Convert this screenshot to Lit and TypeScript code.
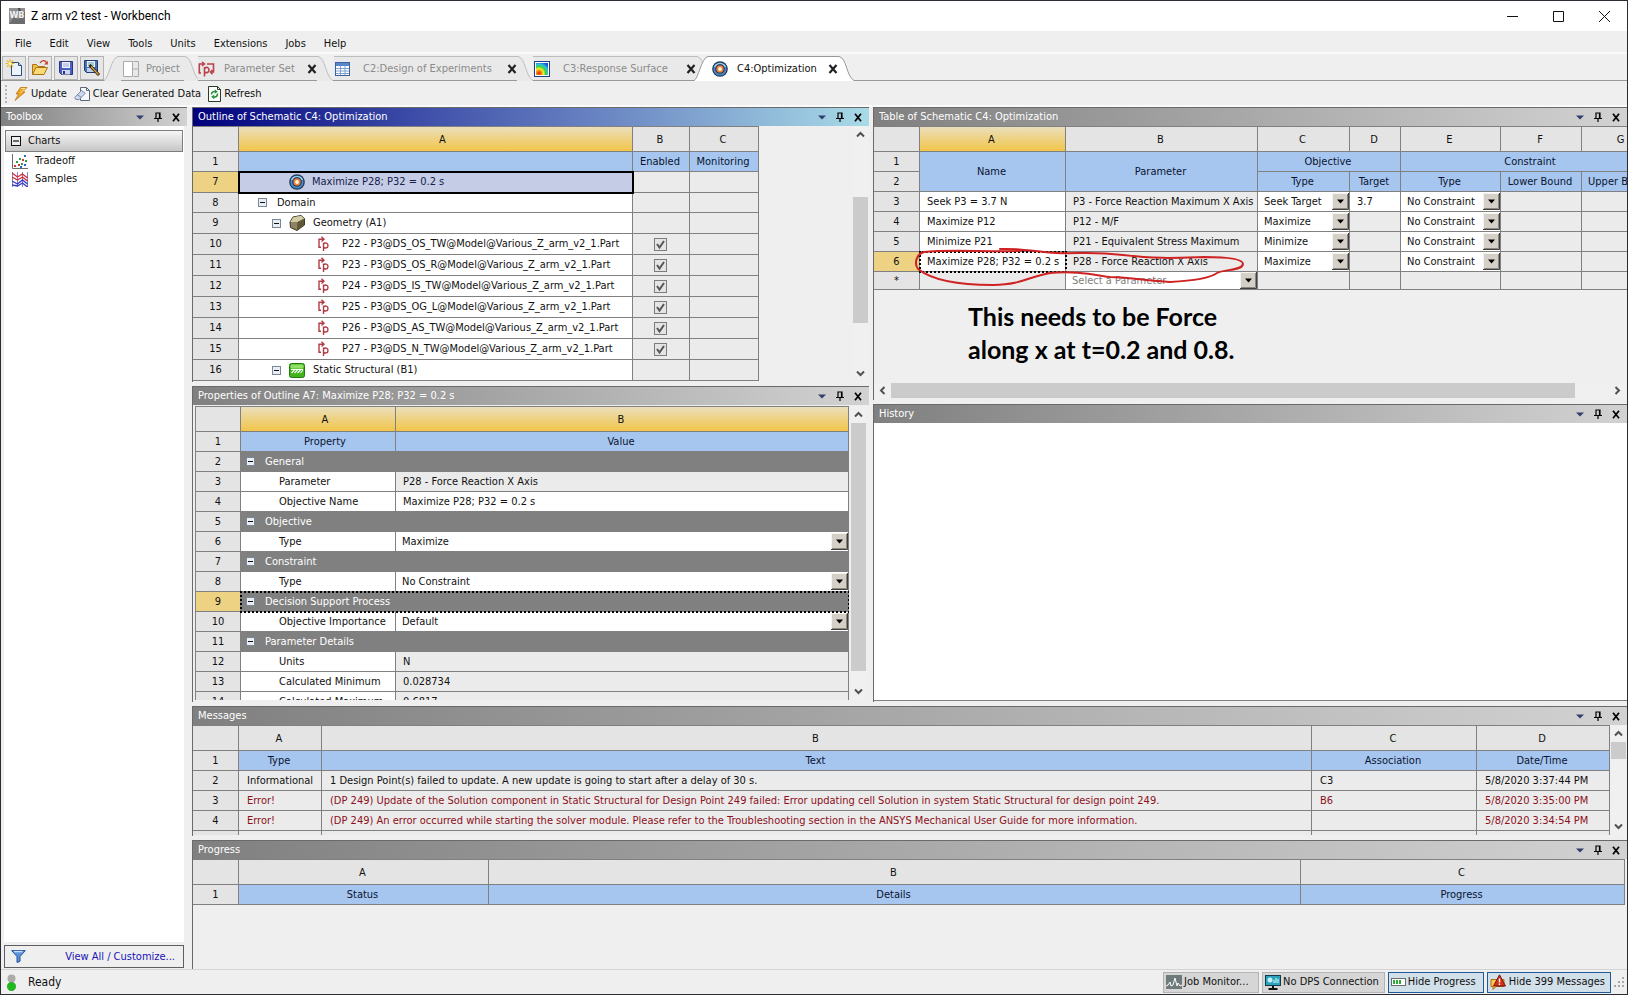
import { LitElement, html, css, svg, nothing } from "lit";
import { customElement, property } from "lit/decorators.js";
import { classMap } from "lit/directives/class-map.js";

const base = css`
  *, *::before, *::after { box-sizing: border-box; }
  button, select, input {
    font: inherit; color: inherit; margin: 0; padding: 0;
    border: 0; border-radius: 0; background: none; appearance: none;
  }
  svg { display: block; flex: none; }
`;

/* ---------- icons ---------- */

const ico = (w: number, h: number, body: unknown) =>
  html`<svg width=${w} height=${h} viewBox="0 0 ${w} ${h}" aria-hidden="true">${body}</svg>`;

const targetIcon = ico(16, 16, svg`
  <circle cx="8" cy="8" r="7.8" fill="#1d3550"/>
  <circle cx="8" cy="8" r="6.6" fill="#4a86c4"/>
  <path d="M2.600 6a6 6 0 0 1 10.800 0" fill="none" stroke="#a4d0f0" stroke-width="1.400"/>
  <circle cx="8" cy="8" r="4.700" fill="#1a2a44"/>
  <circle cx="8" cy="8" r="3.700" fill="#e6803c"/>
  <circle cx="8" cy="8" r="1.900" fill="#fff3dc"/>`);

const newIcon = ico(18, 18, svg`
  <path d="M6.500 3.500h7l3 3v10h-10z" fill="#eaf2fc" stroke="#31507c"/>
  <path d="M13.500 3.500v3h3" fill="#b9cde6" stroke="#31507c"/>
  <path d="M5 0v9M.500 4.500h9M1.800 1.300l6.400 6.400M8.200 1.300L1.800 7.700" stroke="#e8b92d" stroke-width="1.200"/>
  <circle cx="5" cy="4.500" r="1.600" fill="#fff6c0"/>`);

const openIcon = ico(18, 18, svg`
  <path d="M1.500 15.500v-10h4l1.500 2h6.500v3" fill="#f0bc4a" stroke="#a8741a"/>
  <path d="M1.500 15.500l3.500-7h11.500l-3.500 7z" fill="#fbd977" stroke="#a8741a"/>
  <path d="M9 4c2-3 5-3 6.500-.5" fill="none" stroke="#c43a26" stroke-width="1.300"/>
  <path d="M16.800 1.800v3.700h-3.600z" fill="#c43a26"/>`);

const saveIcon = ico(18, 18, svg`
  <path d="M2.500 2.500h13v13h-11l-2-2z" fill="#4a60c0" stroke="#26357c"/>
  <rect x="5" y="3" width="8" height="6" fill="#f2f5ff"/>
  <path d="M6 5h6M6 7h6" stroke="#93a0d8"/>
  <rect x="5" y="11" width="8" height="4.500" fill="#cfd5ee"/>
  <rect x="6" y="12" width="2" height="3" fill="#26357c"/>`);

const saveAsIcon = ico(18, 18, svg`
  <path d="M1.500 1.500h13v12h-11l-2-2z" fill="#4a72b8" stroke="#223a70"/>
  <rect x="4" y="2" width="8" height="6" fill="#e6f3f4"/>
  <path d="M5 4h6M5 6h6" stroke="#6fa3ad"/>
  <rect x="4" y="9" width="7" height="4" fill="#bfd0e6"/>
  <path d="M6.500 6l9.500 10" stroke="#2a2113" stroke-width="3"/>
  <path d="M8 7.500l7.500 8" stroke="#d9a33c" stroke-width="1.300"/>`);

const projectIcon = ico(16, 16, svg`
  <path d="M.500.500h9v15h-9zM9.500 8h6M15.500.500v15M10.500 15.500h5M10.500.500h5" fill="none" stroke="#a9a9a9"/>
  <rect x="1" y="1" width="8" height="14" fill="#fff"/>`);

const paramSetIcon = ico(17, 16, svg`
  <g fill="none" stroke="#b8434b" stroke-width="1.600">
    <path d="M3 12H1.300V3H5M4 1l2.500 2L4 5"/><path d="M9 3h6.500v8h-2.500M14.500 9l-2 2 2 2.200"/>
    <path d="M6.500 6v9.500M6.500 7.500c2-2 4.500-1 4.500 1.500s-2.500 3.500-4.500 1.800"/>
  </g>`);

const paramIcon = ico(11, 16, svg`
  <g fill="none" stroke="#b33c44" stroke-width="1.400">
    <path d="M3 11.300H1V3.200h4M3.500.800L6 3.200 3.500 5.500"/>
    <path d="M5.500 6.500V15M5.500 8c1.500-1.700 4.500-1.300 4.500 1.500s-3 3.200-4.500 1.500"/>
  </g>`);

const tableIcon = ico(15, 14, svg`
  <rect x=".500" y=".500" width="14" height="13" fill="#fff" stroke="#3c62a6"/>
  <rect x="1" y="1" width="13" height="3" fill="#5b86c8"/>
  <path d="M1 6.500h13M1 9h13M1 11.500h13M5.500 4v9M10 4v9" stroke="#7e9fd2"/>`);

const surfaceIcon = html`<svg width="16" height="16" viewBox="0 0 16 16" aria-hidden="true">
  <defs><radialGradient id="rs" cx="0.25" cy="0.85" r="0.95">
    <stop offset="0" stop-color="#e02010"/><stop offset=".22" stop-color="#f08a12"/>
    <stop offset=".4" stop-color="#f2ee2a"/><stop offset=".58" stop-color="#3ad23c"/>
    <stop offset=".78" stop-color="#2cc4dc"/><stop offset="1" stop-color="#2450d8"/>
  </radialGradient></defs>
  <rect x=".5" y=".5" width="15" height="15" fill="#fff" stroke="#1d3f86"/>
  <rect x="2" y="2" width="12" height="12" fill="url(#rs)"/></svg>`;

const boltIcon = ico(14, 14, svg`
  <path d="M6.500.500H13L8.500 5H11L1 13.500 4.800 7H2z" fill="#f4a51e" stroke="#b8741a" stroke-width=".800"/>
  <path d="M7 1.500h4L6.500 6" fill="none" stroke="#ffe08a"/>`);

const clearIcon = ico(16, 15, svg`
  <path d="M6.500 1.500h6l3 3v10h-9z" fill="#f6f8fb" stroke="#5c6878"/>
  <path d="M12.500 1.500v3h3" fill="none" stroke="#5c6878"/>
  <path d="M.700 11.500L7.500 4.500l3.800 2.700-6.300 6.500-3.500-.4z" fill="#cfd8ee" stroke="#7b89ac"/>
  <path d="M3.500 8.800l3.800 2.600" stroke="#7b89ac"/>`);

const refreshIcon = ico(13, 16, svg`
  <path d="M.500.500h9l3 3v12h-12z" fill="#fff" stroke="#2b3a2b"/>
  <path d="M9.500.500v3h3" fill="none" stroke="#2b3a2b"/>
  <path d="M3.500 8.500c0-2.500 2-3.500 4-2.800M9.500 7.500c.2 2.500-1.700 4-4 3.400" fill="none" stroke="#2b8f3a" stroke-width="1.600"/>
  <path d="M6.800 3.300l3 2.500-3 2zM6.200 13.200l-3-2.400 3-2.300z" fill="#2b8f3a"/>`);

const tradeoffIcon = ico(16, 15, svg`
  <path d="M.500 0v14.500H16" fill="none" stroke="#6d6d6d"/>
  <g fill="#2d9a48"><rect x="4" y="7" width="2" height="2"/><rect x="9" y="9" width="2" height="2"/><rect x="7" y="4" width="2" height="2"/><rect x="13" y="6" width="2" height="2"/></g>
  <g fill="#2e62c8"><rect x="12" y="1" width="2" height="2"/><rect x="12" y="10" width="2" height="2"/><rect x="8" y="12" width="2" height="2"/></g>
  <g fill="#d0392b"><rect x="2" y="11" width="2" height="2"/><rect x="6" y="10" width="2" height="2"/><rect x="10" y="5" width="2" height="2"/></g>`);

const samplesIcon = ico(16, 15, svg`
  <path d="M.500 0v15M5.500 0v15M10.500 0v15M15.500 0v15" stroke="#8a7fb4"/>
  <g fill="none" stroke-width="1.400">
    <path d="M0 1l5.500 4 5-3 5 4" stroke="#d02f3c"/><path d="M0 5l5.500 3 5-3 5 4" stroke="#d02f3c"/>
    <path d="M0 9l5.500 3 5-4 5 4" stroke="#3a3fc8"/><path d="M0 13l5.500 1 5-3 5 4" stroke="#3a3fc8"/>
  </g>`);

const geometryIcon = ico(16, 16, svg`
  <path d="M1 7l3-5 8-1.500 3.500 3V10L8 15.500l-6.500-3z" fill="#8d8561" stroke="#38321c"/>
  <path d="M1.300 7l3-4.800L12 .800l3.200 2.700L8.500 7z" fill="#d2cba6"/>
  <path d="M8.500 7l6.700-3.300V10L8 15z" fill="#5f5738"/>`);

const structuralIcon = ico(16, 15, svg`
  <rect x=".500" y=".500" width="15" height="14" rx="2" fill="#43b31c" stroke="#237a0d"/>
  <rect x="1.500" y="1.500" width="13" height="4" rx="1.500" fill="#8fe063"/>
  <path d="M2 6.500h12M2.500 10l3-3M5.500 10l3-3M8.500 10l3-3M11.500 10l2.500-3" stroke="#fff" stroke-width="1.100"/>`);

const filterIcon = ico(15, 13, svg`
  <path d="M.700.600h13.600L9 6.600v4.800l-3 1V6.600z" fill="#5a93dc" stroke="#27539c"/>
  <path d="M3 1.600h8.500" stroke="#c5ddf8" stroke-width="1.400"/>`);

const wbIcon = html`<svg width="16" height="16" viewBox="0 0 16 16" role="img" aria-label="Workbench">
  <rect width="16" height="16" fill="#8f8f8f"/><path d="M0 16l5-7 4 2 7-8v13z" fill="#6c6c6c"/>
  <path d="M9 0l2 0 2 5-3 1z" fill="#4b4b4b"/>
  <text x="8" y="10" text-anchor="middle" font-family="DejaVu Sans Condensed" font-weight="bold" font-size="9" fill="#f1f1f1">WB</text></svg>`;

const monitorIcon = ico(16, 14, svg`
  <rect width="16" height="14" fill="#6e7a7c"/>
  <path d="M0 11l2-1 2-3 1 4 2-1 2-7 2 8 1-3 2 3 2-1" fill="none" stroke="#fff"/>`);

const dpsIcon = ico(16, 15, svg`
  <rect x=".500" y=".500" width="15" height="10" fill="#2ba3bd" stroke="#123a4a"/>
  <circle cx="5" cy="5" r="2.500" fill="#c4f0f6"/><path d="M9 8V5M11 8V3M13 8V4" stroke="#e9fbff"/>
  <path d="M8 11v2M3.500 14h9" stroke="#111" stroke-width="2"/>`);

const progressIcon = ico(15, 8, svg`
  <rect x=".500" y=".500" width="14" height="7" fill="#fff" stroke="#6c6c6c"/>
  <path d="M2 4h2M5 4h2M8 4h2" stroke="#2cae36" stroke-width="4"/>`);

const messageIcon = ico(17, 16, svg`
  <path d="M1 5.500h13v7H6l-3 3v-3H1z" fill="#f7c64b" stroke="#a9731a"/>
  <path d="M9.500.800L15.500 12h-12z" fill="#d3301c" stroke="#7c1508"/>
  <path d="M9.500 4.500v4M9.500 9.500v1.500" stroke="#fff" stroke-width="1.400"/>`);

const closeX = ico(10, 10, svg`<path d="M1.500 1l7 8M8.500 1l-7 8" stroke="#222" stroke-width="2.200"/>`);

/* ---------- combo box ---------- */

@customElement("wb-combo")
class WbCombo extends LitElement {
  static styles = [base, css`
    :host { display: grid; height: 19px; align-items: center; }
    :host([hint]) { height: 17px; }
    select, svg { grid-area: 1 / 1; }
    select { width: 100%; height: 17px; padding: 0 18px 0 6px; overflow: hidden; }
    select.hint { color: #808080; }
    svg { justify-self: end; pointer-events: none; }
  `];
  @property() value = "";
  @property() name = "";
  @property({ type: Boolean }) hint = false;
  @property({ attribute: false }) options: string[] = [];
  render() {
    const all = [this.value, ...this.options.filter((o) => o !== this.value)];
    return html`<select class=${classMap({ hint: this.hint })} aria-label=${this.name}>
        ${all.map((o) => html`<option>${o}</option>`)}
      </select>
      ${ico(17, 17, svg`
        <rect width="17" height="17" fill="#d4d0c8"/>
        <path d="M.500 16V.500H16" fill="none" stroke="#f6f4ee"/>
        <path d="M16.500 0v16.500H0" fill="none" stroke="#404040"/>
        <path d="M15.500 1v14.500H1" fill="none" stroke="#8c8880"/>
        <path d="M5 6.500h7L8.500 10.500z" fill="#000"/>`)}`;
  }
}

/* ---------- scroll bar ---------- */

@customElement("wb-scroll")
class WbScroll extends LitElement {
  static styles = [base, css`
    :host { display: flex; flex: none; background: #f0f0f0; }
    .bar { display: flex; flex: 1; flex-direction: column; width: 15px; }
    .bar.h { flex-direction: row; width: auto; height: 15px; }
    button { display: grid; place-items: center; flex: none; width: 15px; height: 17px; }
    .h button { width: 17px; height: 15px; }
    .gap { flex-basis: 0; }
    .thumb { flex-basis: 0; background: #cbcbcb; }
  `];
  @property({ type: Boolean }) horizontal = false;
  @property({ type: Number }) before = 0;
  @property({ type: Number }) size = 1;
  @property({ type: Number }) after = 0;
  render() {
    const h = this.horizontal;
    const arrow = (d: string) => ico(9, 9, svg`<path d=${d} fill="none" stroke="#505050" stroke-width="2"/>`);
    return html`<div class=${classMap({ bar: true, h })}>
      <button aria-label="Scroll back">${arrow(h ? "M6.500 1L3 4.500 6.500 8" : "M1 6.500L4.500 3 8 6.500")}</button>
      <div class="gap" style="flex-grow:${this.before}"></div>
      <div class="thumb" style="flex-grow:${this.size}"></div>
      <div class="gap" style="flex-grow:${this.after}"></div>
      <button aria-label="Scroll forward">${arrow(h ? "M2.500 1L6 4.500 2.500 8" : "M1 2.500L4.500 6 8 2.500")}</button>
    </div>`;
  }
}

/* ---------- docked pane ---------- */

@customElement("wb-pane")
class WbPane extends LitElement {
  static styles = [base, css`
    :host {
      display: flex; flex-direction: column; box-sizing: border-box; min-width: 0; min-height: 0; overflow: hidden;
      border-top: 1px solid #6a6a6a; border-left: 1px solid #6a6a6a;
    }
    header {
      display: flex; align-items: center; flex: none; height: 18px; padding: 0 4px 0 5px;
      color: #fff; background: linear-gradient(90deg, #808080, #d2d2d2);
    }
    header.active { background: linear-gradient(90deg, #00007c, #3d4da8 33%, #6c88c4 62%, #a8dbe7); }
    h2 { flex: 1; margin: 0; font: inherit; overflow: hidden; white-space: nowrap; }
    .tools { display: flex; gap: 4px; }
    .tools button { display: grid; place-items: center; width: 14px; height: 16px; }
    .body { display: flex; flex: 1; flex-direction: column; min-height: 0; }
  `];
  @property() heading = "";
  @property({ type: Boolean }) active = false;
  render() {
    return html`<header class=${classMap({ active: this.active })}>
        <h2>${this.heading}</h2>
        <div class="tools">
          <button aria-label="Pane menu">${ico(8, 5, svg`<path d="M0 .500h8L4 4.500z" fill="#2f3f6e"/>`)}</button>
          <button aria-label="Pin">${ico(8, 10, svg`<path d="M2 6V1h4v5M5.500 1v5M0 6.500h8M4 7v3" fill="none" stroke="#000" stroke-width="1.200"/>`)}</button>
          <button aria-label="Close">${ico(8, 9, svg`<path d="M1 .800l6 7.400M7 .800L1 8.200" stroke="#000" stroke-width="1.700"/>`)}</button>
        </div>
      </header>
      <div class="body"><slot></slot></div>`;
  }
}

/* ---------- data ---------- */

type TreeRow = {
  n: number; label: string; level: "objective" | "group" | "system" | "param";
  icon?: unknown; box?: boolean; check?: boolean; selected?: boolean;
};

const tree: TreeRow[] = [
  { n: 7, label: "Maximize P28; P32 = 0.2 s", level: "objective", icon: targetIcon, selected: true },
  { n: 8, label: "Domain", level: "group", box: true },
  { n: 9, label: "Geometry (A1)", level: "system", box: true, icon: geometryIcon },
  ...[["P22", "OS_TW"], ["P23", "OS_R"], ["P24", "IS_TW"], ["P25", "OG_L"], ["P26", "AS_TW"], ["P27", "N_TW"]].map(
    ([p, s], i): TreeRow => ({
      n: 10 + i, label: `${p} - P3@DS_${s}@Model@Various_Z_arm_v2_1.Part`,
      level: "param", icon: paramIcon, check: true,
    })),
  { n: 16, label: "Static Structural (B1)", level: "system", box: true, icon: structuralIcon },
];

const objectives = [
  { n: 3, name: "Seek P3 = 3.7 N", param: "P3 - Force Reaction Maximum X Axis", type: "Seek Target", target: "3.7" },
  { n: 4, name: "Maximize P12", param: "P12 - M/F", type: "Maximize", target: "" },
  { n: 5, name: "Minimize P21", param: "P21 - Equivalent Stress Maximum", type: "Minimize", target: "" },
  { n: 6, name: "Maximize P28; P32 = 0.2 s", param: "P28 - Force Reaction X Axis", type: "Maximize", target: "", current: true },
];

type Prop = { n: number; group?: string; label?: string; value?: string; kind?: "edit" | "combo"; current?: boolean };
const props: Prop[] = [
  { n: 2, group: "General" },
  { n: 3, label: "Parameter", value: "P28 - Force Reaction X Axis" },
  { n: 4, label: "Objective Name", value: "Maximize P28; P32 = 0.2 s", kind: "edit" },
  { n: 5, group: "Objective" },
  { n: 6, label: "Type", value: "Maximize", kind: "combo" },
  { n: 7, group: "Constraint" },
  { n: 8, label: "Type", value: "No Constraint", kind: "combo" },
  { n: 9, group: "Decision Support Process", current: true },
  { n: 10, label: "Objective Importance", value: "Default", kind: "combo" },
  { n: 11, group: "Parameter Details" },
  { n: 12, label: "Units", value: "N" },
  { n: 13, label: "Calculated Minimum", value: "0.028734" },
  { n: 14, label: "Calculated Maximum", value: "0.6817" },
];

const messages = [
  { n: 2, type: "Informational", text: "1 Design Point(s) failed to update. A new update is going to start after a delay of 30 s.", assoc: "C3", time: "5/8/2020 3:37:44 PM" },
  { n: 3, type: "Error!", text: "(DP 249) Update of the Solution component in Static Structural for Design Point 249 failed: Error updating cell Solution in system Static Structural for design point 249.", assoc: "B6", time: "5/8/2020 3:35:00 PM" },
  { n: 4, type: "Error!", text: "(DP 249) An error occurred while starting the solver module. Please refer to the Troubleshooting section in the ANSYS Mechanical User Guide for more information.", assoc: "", time: "5/8/2020 3:34:54 PM" },
];

const goalTypes = ["No Objective", "Minimize", "Maximize", "Seek Target"];
const constraintTypes = ["No Constraint", "Values = Bound", "Values <= Upper Bound"];

const tabs = [
  { label: "Project", icon: projectIcon, cls: "project", close: false },
  { label: "Parameter Set", icon: paramSetIcon, cls: "params", close: true },
  { label: "C2:Design of Experiments", icon: tableIcon, cls: "doe", close: true },
  { label: "C3:Response Surface", icon: surfaceIcon, cls: "surface", close: true },
  { label: "C4:Optimization", icon: targetIcon, cls: "current", close: true },
];

const minusBox = html`<button class="fold" aria-label="Collapse">${ico(9, 9, svg`
  <rect x=".500" y=".500" width="8" height="8" fill="#e9edf4" stroke="#7b8794"/><path d="M2 4.500h5" stroke="#111"/>`)}</button>`;

const cols = (...w: (number | null)[]) =>
  html`<colgroup>${w.map((x) => (x === null ? html`<col>` : html`<col style="width:${x}px">`))}</colgroup>`;

/* ---------- application ---------- */

@customElement("app-root")
class AppRoot extends LitElement {
  static styles = [base, css`
    :host {
      display: flex; flex-direction: column; height: 100vh; overflow: hidden; box-sizing: border-box;
      border: 1px solid #2b2b33; background: #efefef; color: #111;
      font: 11px/14px "DejaVu Sans Condensed", "DejaVu Sans", sans-serif; 
    }
    .titlebar { display: flex; align-items: center; flex: none; height: 30px; padding-left: 8px; background: #fff; }
    .titlebar h1 { flex: 1; margin: 0 0 0 6px; font: 12px/16px Roboto, sans-serif; color: #000; }
    .titlebar button { display: grid; place-items: center; width: 46px; height: 30px; }

    .menu { display: flex; align-items: center; flex: none; height: 23px; padding: 5px 0 0 5px; border-bottom: 2px solid #fafafa; }
    .menu button { padding: 0 9px; }

    .tabrow { display: flex; flex: none; height: 27px; padding: 2px 0 0 1px; background: linear-gradient(#999, #999) bottom / 100% 1px no-repeat; }
    .files { display: flex; gap: 2px; }
    .files button { display: grid; place-items: center; width: 24px; height: 24px; border: 1px solid #b4b4b4; background: #e6e6e6; }
    .tabs { display: flex; }
    .tab { display: flex; height: 25px; color: #8b8b8b; }
    .tab + .tab { margin-left: -16px; }
    .tab .face {
      display: flex; align-items: center; flex: 1; height: 25px; white-space: nowrap;
      border-top: 1px solid #bdbdbd; border-bottom: 1px solid #999; background: #e9e9e9;
    }
    .tab button { display: grid; place-items: center start; }
    .tab .name { flex: 1; }
    .tab .x { width: 12px; place-items: center end; }
    .tab.project { width: 96px; }
    .tab.project .face { gap: 7px; padding-left: 2px; }
    .tab.params { width: 149px; }
    .tab.params .face { gap: 9px; }
    .tab.doe { width: 215px; }
    .tab.doe .face { gap: 13px; padding-left: 1px; }
    .tab.surface { width: 196px; }
    .tab.surface .face { gap: 13px; padding-left: 1px; }
    .tab.current { z-index: 1; width: 160px; margin-left: -18px; color: #111; }
    .tab.current .face { gap: 9px; padding-left: 1px; background: #fff; border-top-color: #999; border-bottom-color: #fff; }

    .toolbar { display: flex; align-items: center; flex: none; height: 26px; padding: 1px 4px 0; gap: 7px; border-bottom: 2px solid #fafafa; }
    .toolbar button { display: flex; align-items: center; gap: 3px; }
    .grip { width: 2px; height: 18px; background: repeating-linear-gradient(#b5b5b5 0 2px, transparent 2px 4px); }

    .dock { display: flex; flex: 1; min-height: 0; gap: 5px; }
    .toolbox { flex: none; width: 186px; border-left: 0; }
    .boxlist { display: flex; flex-direction: column; flex: 1; margin: 0 3px; padding: 4px 1px; background: #fff; }
    .chart-head {
      display: flex; align-items: center; gap: 7px; height: 22px; padding-left: 5px; text-align: left;
      border: 1px solid #7d7d7d; background: linear-gradient(#f6f6f6, #c6c6c6);
    }
    .boxitem { display: flex; align-items: center; gap: 7px; height: 18px; padding-left: 7px; }
    .custom { display: flex; align-items: center; justify-content: space-between; flex: none; height: 23px; margin: 3px 3px 1px; padding: 0 8px 0 6px; border: 1px solid #5e5e5e; }
    .custom a { color: #1a12b8; text-decoration: none; }

    .work { display: flex; flex: 1; flex-direction: column; gap: 4px; min-width: 0; }
    .upper { display: flex; flex: 595 1 0; gap: 4px; min-height: 0; }
    .left { display: flex; flex: 677 1 0; flex-direction: column; gap: 4px; min-width: 0; }
    .right { display: flex; flex: 754 1 0; flex-direction: column; gap: 4px; min-width: 0; }
    .p-outline { flex: 274 1 0; }
    .p-props { flex: 315 1 0; }
    .p-table { flex: 292 1 0; }
    .p-history { flex: 297 1 0; }
    .p-messages { flex: 129 1 0; }
    .p-progress { flex: 128 1 0; }
    .row { display: flex; flex: 1; min-height: 0; padding-right: 1px; gap: 2px; }
    .row.inset { padding: 1px 3px 2px 2px; }
    .row.tight { padding-bottom: 1px; gap: 1px; }
    .row.tight td:not(.head) { padding-left: 8px; }
    .row.wide { padding-right: 2px; }
    .view { flex: 1; min-width: 0; overflow: hidden; }
    .canvas { position: relative; flex: 1; min-height: 0; overflow: hidden; }
    .hbar { flex: none; padding: 0 1px 2px 0; }
    .history { flex: 1; margin-bottom: 1px; background: #fff; border-bottom: 1px solid #808080; }

    table { table-layout: fixed; border-collapse: separate; border-spacing: 0; border-top: 1px solid #808080; }
    table.outline { width: 566px; }
    table.goals { width: 788px; }
    table.fill { width: 100%; }
    table.props { border-left: 1px solid #808080; }
    th, td { height: 20px; padding: 0; font-weight: normal; white-space: nowrap; overflow: hidden; border-right: 1px solid #808080; border-bottom: 1px solid #808080; }
    td { padding-left: 7px; background: #ebebeb; }
    td.ctl { padding: 0; }
    thead th { height: 25px; padding: 2px 2px 0 0; background: #e4e4e4; }
    thead th.hot { background: linear-gradient(#ebdfbb, #f1c549); }
    tbody th { background: #e4e4e4; }
    tbody th.hot { background: #eed283; }
    tr.tree > * { height: 21px; }
    tr.short > * { height: 20px; }
    tr.star > * { height: 18px; }
    td.head { padding: 0 2px 0 0; text-align: center; background: #a6c6ef; color: #0a1430; }
    table .indent { padding-left: 16px; }
    td.w { background: #fff; }
    td.group { padding-left: 5px; background: #808080; color: #fff; }
    td.dots { position: relative; overflow: visible; outline: 2px dotted #000; outline-offset: -1px; }
    td.label { padding-left: 38px; }
    td.sel { position: relative; background: #c4cce6; color: #16204a; outline: 2px solid #000; outline-offset: -1px; }
    td.mid { padding: 0 2px 0 0; text-align: center; }
    tr.error td { color: #8b1020; }
    .node { display: flex; align-items: center; gap: 7px; }
    .node.objective { padding-left: 43px; }
    .node.group { gap: 10px; padding-left: 12px; }
    .node.system { gap: 8px; padding-left: 26px; }
    .node.param { gap: 13px; padding-left: 72px; }
    .fold { display: block; }
    .cat { display: flex; align-items: center; gap: 10px; }
    input[type="checkbox"] {
      display: block; width: 13px; height: 13px; margin: 0 auto; border: 1px solid #7c7c7c;
      background: #e4e4e4 url("data:image/svg+xml,%3Csvg xmlns='http://www.w3.org/2000/svg' viewBox='0 0 11 11'%3E%3Cpath d='M2 5l2.500 3.500L9 2' fill='none' stroke='%23555' stroke-width='2'/%3E%3C/svg%3E");
    }

    .ink { position: absolute; left: 38px; top: 118px; }
    .note { position: absolute; left: 94px; top: 174px; margin: 0; font: bold 25px/33px Lato, sans-serif; color: #000; white-space: nowrap; }

    .status { display: flex; align-items: center; flex: none; height: 25px; padding: 0 2px 0 6px; gap: 3px; border-top: 1px solid #d4d4d4; }
    .status p { flex: 1; margin: 0; padding-left: 9px; font-size: 12px; }
    .status button { display: flex; align-items: center; gap: 2px; min-width: 96px; height: 21px; padding: 0 5px 0 2px; border: 1px solid #b3b3b3; background: #d6d6d6; white-space: nowrap; }
    .status button.on { border-color: #1f5a96; background: #d2e0ea; }
  `];

  private tab(t: (typeof tabs)[number]) {
    const on = t.cls === "current";
    const line = on ? "#999" : "#bdbdbd";
    const fill = on ? "#fff" : "#e9e9e9";
    const first = on || t.cls === "project";
    const lead = t.cls === "params" ? 14 : 17;
    return html`<div class="tab ${t.cls}">
      ${ico(lead, 25, first ? svg`
        <path d="M0 25C5 22 6 3 14 .500H17V25z" fill=${fill}/>
        <path d="M0 24.500C5 22 7 2 14 .500H17" fill="none" stroke=${line}/>` : nothing)}
      <div class="face">${t.icon}<button class="name">${t.label}</button>
        ${t.close ? html`<button class="x" aria-label="Close ${t.label}">${closeX}</button>` : nothing}</div>
      ${ico(16, 25, svg`
        <path d="M0 .500H1C9 2 8 20 16 24.500V25H0z" fill=${fill}/>
        <path d="M0 .500H1C9 2 8 20 16 24.500" fill="none" stroke=${line}/>`)}
    </div>`;
  }

  private outline() {
    return html`<table class="outline">
      ${cols(46, 394, 57, 69)}
      <thead><tr><th></th><th class="hot indent">A</th><th>B</th><th>C</th></tr></thead>
      <tbody>
        <tr><th>1</th><td class="head"></td><td class="head">Enabled</td><td class="head">Monitoring</td></tr>
        ${tree.map((r) => html`<tr class=${r.level === "group" ? "short" : "tree"}>
          <th class=${r.selected ? "hot" : ""}>${r.n}</th>
          <td class=${r.selected ? "sel" : "w"}>
            <div class="node ${r.level}">${r.box ? minusBox : nothing}${r.icon ?? nothing}<span>${r.label}</span></div>
          </td>
          <td class="mid">${r.check ? html`<input type="checkbox" checked aria-label="Enable ${r.label}">` : nothing}</td>
          <td></td></tr>`)}
      </tbody></table>`;
  }

  private properties() {
    return html`<table class="fill props">
      ${cols(45, 155, null)}
      <thead><tr><th></th><th class="hot indent">A</th><th class="hot">B</th></tr></thead>
      <tbody>
        <tr><th>1</th><td class="head indent">Property</td><td class="head">Value</td></tr>
        ${props.map((p) => html`<tr>
          <th class=${p.current ? "hot" : ""}>${p.n}</th>
          ${p.group
            ? html`<td colspan="2" class=${classMap({ group: true, dots: !!p.current })}><div class="cat">${minusBox}<span>${p.group}</span></div></td>`
            : html`<td class="w label">${p.label}</td>
              ${p.kind === "combo"
                ? html`<td class="w ctl"><wb-combo .value=${p.value!} .name=${p.label!}></wb-combo></td>`
                : html`<td class=${p.kind === "edit" ? "w" : ""}>${p.value}</td>`}`}
        </tr>`)}
      </tbody></table>`;
  }

  private goals() {
    return html`<table class="goals">
      ${cols(46, 146, 192, 92, 51, 100, 81, 80)}
      <thead><tr><th></th><th class="hot">A</th>${["B", "C", "D", "E", "F", "G"].map((c) => html`<th>${c}</th>`)}</tr></thead>
      <tbody>
        <tr><th>1</th><td class="head" rowspan="2">Name</td><td class="head" rowspan="2">Parameter</td>
          <td class="head" colspan="2">Objective</td><td class="head" colspan="3">Constraint</td></tr>
        <tr><th>2</th>${["Type", "Target", "Type", "Lower Bound", "Upper Bound"].map((c) => html`<td class="head">${c}</td>`)}</tr>
        ${objectives.map((o) => html`<tr>
          <th class=${o.current ? "hot" : ""}>${o.n}</th>
          <td class=${classMap({ w: true, dots: !!o.current })}>${o.name}</td>
          <td>${o.param}</td>
          <td class="w ctl"><wb-combo .value=${o.type} .options=${goalTypes} name="Objective type"></wb-combo></td>
          <td class=${o.target ? "w" : ""}>${o.target}</td>
          <td class="w ctl"><wb-combo value="No Constraint" .options=${constraintTypes} name="Constraint type"></wb-combo></td>
          <td></td><td></td></tr>`)}
        <tr class="star"><th>*</th><td></td>
          <td class="w ctl"><wb-combo hint value="Select a Parameter" name="New parameter"></wb-combo></td>
          <td></td><td></td><td></td><td></td><td></td></tr>
      </tbody></table>`;
  }

  render() {
    return html`
      <header class="titlebar">${wbIcon}<h1>Z arm v2 test - Workbench</h1>
        <button aria-label="Minimize">${ico(11, 11, svg`<path d="M0 5.500h11" stroke="#111"/>`)}</button>
        <button aria-label="Maximize">${ico(11, 11, svg`<path d="M.500.500h10v10H.500z" fill="none" stroke="#111"/>`)}</button>
        <button aria-label="Close">${ico(11, 11, svg`<path d="M0 0l11 11M11 0L0 11" stroke="#111"/>`)}</button>
      </header>
      <nav class="menu">${["File", "Edit", "View", "Tools", "Units", "Extensions", "Jobs", "Help"].map((m) => html`<button>${m}</button>`)}</nav>
      <div class="tabrow">
        <div class="files">
          <button aria-label="New">${newIcon}</button><button aria-label="Open">${openIcon}</button>
          <button aria-label="Save">${saveIcon}</button><button aria-label="Save As">${saveAsIcon}</button>
        </div>
        <div class="tabs">${tabs.map((t) => this.tab(t))}</div>
      </div>
      <div class="toolbar"><span class="grip"></span>
        <button>${boltIcon}Update</button><button>${clearIcon}Clear Generated Data</button><button>${refreshIcon}Refresh</button>
      </div>

      <main class="dock">
        <wb-pane class="toolbox" heading="Toolbox">
          <div class="boxlist">
            <button class="chart-head">${ico(10, 10, svg`<rect x=".500" y=".500" width="9" height="9" fill="#eee" stroke="#111"/><path d="M2 5h6" stroke="#111" stroke-width="1.200"/>`)}Charts</button>
            <div class="boxitem">${tradeoffIcon}Tradeoff</div>
            <div class="boxitem">${samplesIcon}Samples</div>
          </div>
          <div class="custom">${filterIcon}<a href="#customize">View All / Customize...</a></div>
        </wb-pane>

        <div class="work">
          <div class="upper">
            <div class="left">
              <wb-pane class="p-outline" active heading="Outline of Schematic C4: Optimization">
                <div class="row"><div class="view">${this.outline()}</div>
                  <wb-scroll before="54" size="126" after="42"></wb-scroll></div>
              </wb-pane>
              <wb-pane class="p-props" heading="Properties of Outline A7: Maximize P28; P32 = 0.2 s">
                <div class="row inset"><div class="view">${this.properties()}</div>
                  <wb-scroll before="0" size="248" after="12"></wb-scroll></div>
              </wb-pane>
            </div>
            <div class="right">
              <wb-pane class="p-table" heading="Table of Schematic C4: Optimization">
                <div class="canvas">${this.goals()}
                  <svg class="ink" width="340" height="46" viewBox="38 118 340 46" aria-hidden="true">
                    <path d="M126 123C149 122 160 126 183 127C205 128 215 125 249 129C283 133 300 132 330 131C360 131 369 134 369 138C368 145 350 143 343 147C336 152 315 155 296 156C269 154 250 151 236 151C215 148 200 145 176 147C153 151 150 158 119 159C89 159 59 155 44 143C40 138 42 128 50 126C75 123 110 126 146 125"
                      fill="none" stroke="#cf2222" stroke-width="2" stroke-linecap="round"/>
                  </svg>
                  <p class="note">This needs to be Force<br>along x at t=0.2 and 0.8.</p>
                </div>
                <div class="hbar"><wb-scroll horizontal before="0" size="685" after="34"></wb-scroll></div>
              </wb-pane>
              <wb-pane class="p-history" heading="History"><div class="history"></div></wb-pane>
            </div>
          </div>

          <wb-pane class="p-messages" heading="Messages">
            <div class="row tight"><div class="view"><table class="fill">
              ${cols(46, 83, null, 165, 133)}
              <thead><tr><th></th><th>A</th><th>B</th><th>C</th><th>D</th></tr></thead>
              <tbody>
                <tr><th>1</th><td class="head">Type</td><td class="head">Text</td><td class="head">Association</td><td class="head">Date/Time</td></tr>
                ${messages.map((m) => html`<tr class=${m.type === "Error!" ? "error" : ""}>
                  <th>${m.n}</th><td>${m.type}</td><td>${m.text}</td><td>${m.assoc}</td><td>${m.time}</td></tr>`)}
                <tr><th></th><td></td><td></td><td></td><td></td></tr>
              </tbody></table></div>
              <wb-scroll before="0" size="17" after="59"></wb-scroll></div>
          </wb-pane>

          <wb-pane class="p-progress" heading="Progress">
            <div class="row wide"><div class="view"><table class="fill">
              ${cols(46, 250, null, 324)}
              <thead><tr><th></th><th>A</th><th>B</th><th>C</th></tr></thead>
              <tbody><tr><th>1</th><td class="head">Status</td><td class="head">Details</td><td class="head">Progress</td></tr></tbody>
            </table></div></div>
          </wb-pane>
        </div>
      </main>

      <footer class="status">
        ${ico(9, 17, svg`<circle cx="4.500" cy="4.500" r="4" fill="#ababab"/><circle cx="4.500" cy="12.500" r="4.200" fill="#1dbb1d" stroke="#0b8a0b" stroke-width=".500"/>`)}
        <p>Ready</p>
        <button>${monitorIcon}Job Monitor...</button>
        <button>${dpsIcon}No DPS Connection</button>
        <button class="on">${progressIcon}Hide Progress</button>
        <button class="on">${messageIcon}Hide 399 Messages</button>
        ${ico(11, 11, svg`<g fill="#a9a9a9"><path d="M8 0h2v2H8zM8 4h2v2H8zM8 8h2v2H8zM4 4h2v2H4zM4 8h2v2H4zM0 8h2v2H0z"/></g>`)}
      </footer>`;
  }
}
